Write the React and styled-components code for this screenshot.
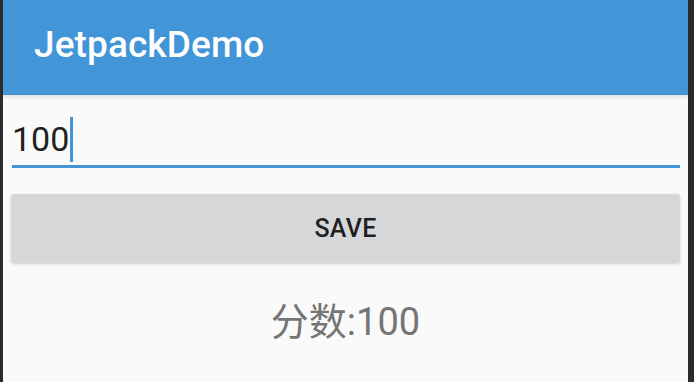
import React, { useState } from 'react';
import styled, { createGlobalStyle } from 'styled-components';

const GlobalStyle = createGlobalStyle`
  html, body {
    margin: 0;
    padding: 0;
    background: #2b2b2b;
  }
  body {
    font-family: Roboto, "Noto Sans CJK SC", sans-serif;
  }
`;

const Frame = styled.div`
  display: flex;
  width: 694px;
  height: 382px;
  padding: 0 6px 0 3px;
  box-sizing: border-box;
  background: #2b2b2b;
`;

const Screen = styled.div`
  flex: 1;
  display: flex;
  flex-direction: column;
  background: #fafafa;
  overflow: hidden;
`;

const AppBar = styled.header`
  position: relative;
  z-index: 1;
  height: 95px;
  display: flex;
  align-items: center;
  padding: 0 0 6px 31px;
  box-sizing: border-box;
  background: #4295d6;
  box-shadow: 0 2px 4px rgba(0, 0, 0, 0.12);
`;

const Title = styled.h1`
  margin: 0;
  color: #fff;
  font-family: Roboto, sans-serif;
  font-weight: 500;
  font-size: 37px;
  letter-spacing: 0.1px;
`;

const Body = styled.div`
  display: flex;
  flex-direction: column;
  padding: 18px 8px 0 8px;
`;

const Field = styled.label`
  display: flex;
  align-items: center;
  height: 52px;
  margin: 0 0 0 1px;
  border-bottom: 3px solid #4295d6;
`;

const Value = styled.span`
  font-family: Roboto, sans-serif;
  font-size: 34px;
  color: #212121;
  line-height: 1;
`;

const Caret = styled.span`
  width: 3px;
  height: 45px;
  margin-left: 1px;
  background: #4295d6;
`;

const SaveButton = styled.button`
  margin-top: 26px;
  height: 69px;
  border: none;
  border-radius: 3px;
  background: #d6d7d8;
  box-shadow: 0 1px 3px rgba(0, 0, 0, 0.18);
  font-family: Roboto, sans-serif;
  font-weight: 500;
  font-size: 25px;
  letter-spacing: 0.3px;
  color: #1f1f1f;
  cursor: pointer;
`;

const Score = styled.div`
  margin-top: 28px;
  text-align: center;
  font-family: Roboto, "Noto Sans CJK SC", sans-serif;
  font-size: 38px;
  color: #757575;
`;

export default function App() {
  const [value] = useState('100');
  const [score, setScore] = useState(100);

  return (
    <>
      <GlobalStyle />
      <Frame>
        <Screen>
          <AppBar>
            <Title>JetpackDemo</Title>
          </AppBar>
          <Body>
            <Field>
              <Value>{value}</Value>
              <Caret />
            </Field>
            <SaveButton onClick={() => setScore(Number(value) || 0)}>SAVE</SaveButton>
            <Score>分数:{score}</Score>
          </Body>
        </Screen>
      </Frame>
    </>
  );
}
